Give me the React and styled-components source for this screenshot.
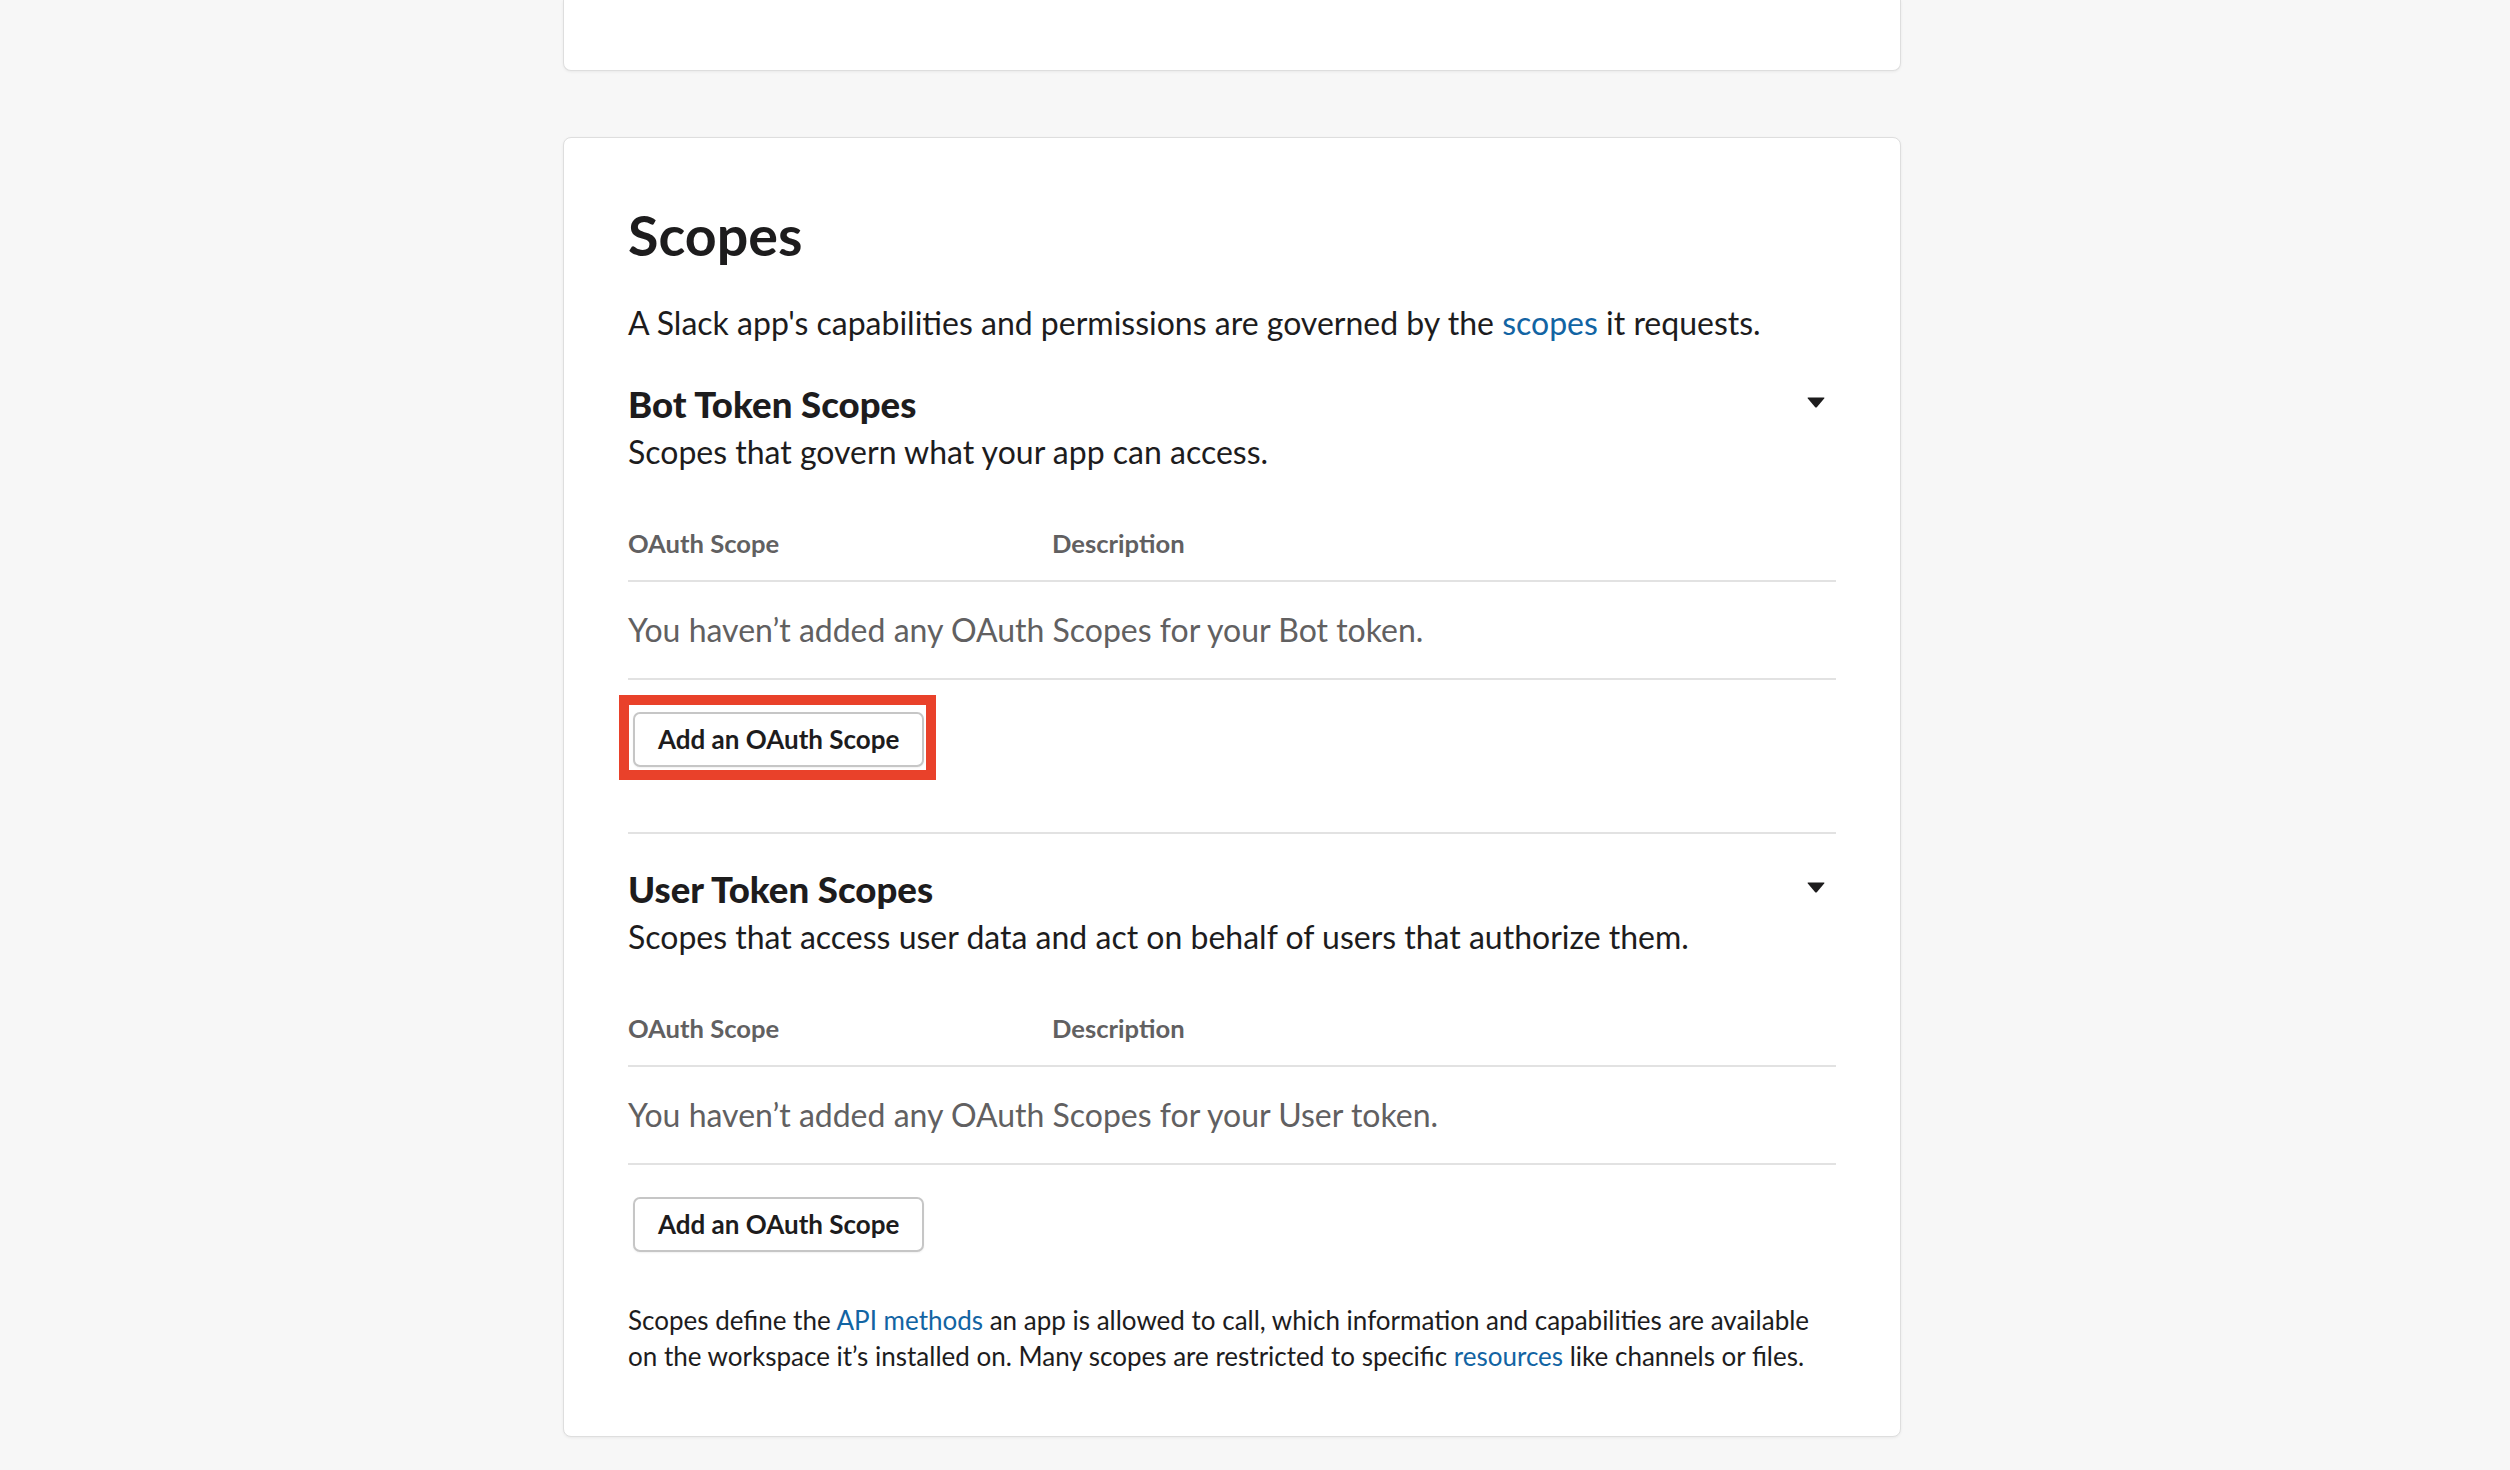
import React from "react";
import styled, { createGlobalStyle } from "styled-components";

const Global = createGlobalStyle`
  html, body { margin: 0; padding: 0; }
  body {
    background: #f7f7f7;
    font-family: Lato, "Open Sans", "Liberation Sans", sans-serif;
    color: #1d1c1d;
    -webkit-font-smoothing: antialiased;
  }
`;

const Page = styled.div`
  display: grid;
  grid-template-columns: 563px 1338px 1fr;
  min-height: 1470px;
`;

const Main = styled.main`
  grid-column: 2;
  display: flex;
  flex-direction: column;
  gap: 66px;
`;

const Card = styled.section`
  box-sizing: border-box;
  background: #fff;
  border: 1px solid #dedede;
  border-radius: 8px;
  box-shadow: 0 1px 3px rgba(0, 0, 0, 0.06);
  padding: 64px 64px 62px;
`;

const TopCard = styled(Card)`
  height: 71px;
  padding: 0;
  border-top: none;
  border-radius: 0 0 8px 8px;
`;

const Title = styled.h1`
  margin: 0;
  font-size: 55.6px;
  line-height: 1.2;
  font-weight: 700;
  color: #1d1c1d;
`;

const Lead = styled.p`
  margin: 30px 0 0;
  font-size: 32px;
  line-height: 48px;
  font-weight: 400;
  color: #1d1c1d;
`;

const Link = styled.a`
  color: #1264a3;
  text-decoration: none;
`;

const Section = styled.div`
  padding-top: ${(p) => p.$pt}px;
  padding-bottom: ${(p) => p.$pb || 0}px;
  border-bottom: ${(p) => (p.$divider ? "2px solid #e2e2e2" : "none")};
`;

const SectionHead = styled.div`
  display: flex;
  align-items: center;
  justify-content: space-between;
`;

const SectionTitle = styled.h2`
  margin: 0;
  font-size: 36.6px;
  line-height: 1.2;
  font-weight: 900;
  color: #1d1c1d;
`;

const Caret = styled.svg`
  width: 18px;
  height: 11px;
  margin-right: 11px;
  margin-top: -4px;
`;

const SectionSub = styled.p`
  margin: 1px 0 0;
  font-size: 32px;
  line-height: 48px;
  color: #1d1c1d;
`;

const Table = styled.div`
  margin-top: 49px;
`;

const HeadRow = styled.div`
  display: grid;
  grid-template-columns: 424px 1fr;
  padding-bottom: 19px;
  border-bottom: 2px solid #e2e2e2;
`;

const HeadCell = styled.div`
  font-size: 25.6px;
  line-height: 36px;
  font-weight: 700;
  color: #616061;
`;

const EmptyRow = styled.div`
  padding: 24px 0 24px;
  font-size: 32px;
  line-height: 48px;
  color: #616061;
  border-bottom: 2px solid #e2e2e2;
`;

const ButtonRow = styled.div`
  display: flex;
  padding: 32px 0 0 5px;
`;

const Button = styled.button`
  position: relative;
  box-sizing: border-box;
  height: 55px;
  padding: 0 23px;
  background: #fff;
  border: 2px solid #c6c6c6;
  border-radius: 7px;
  box-shadow: 0 1px 2px rgba(0, 0, 0, 0.06);
  font-family: Lato, "Open Sans", "Liberation Sans", sans-serif;
  font-size: 26px;
  font-weight: 700;
  color: #1d1c1d;
  cursor: pointer;

  ${(p) =>
    p.$highlight &&
    `
    &::after {
      content: "";
      position: absolute;
      left: -16px;
      right: -14px;
      top: -19px;
      bottom: -15px;
      border: 10px solid #e9412a;
      pointer-events: none;
    }
  `}
`;

const Footer = styled.p`
  margin: 50px 0 0;
  font-size: 26px;
  line-height: 36px;
  color: #1d1c1d;
`;

const CaretIcon = () => (
  <Caret viewBox="0 0 18 11" aria-hidden="true">
    <path
      d="M1.2 0.5 H16.8 Q18 0.5 17.2 1.6 L9.8 10.2 Q9 11 8.2 10.2 L0.8 1.6 Q0 0.5 1.2 0.5 Z"
      fill="#1d1c1d"
    />
  </Caret>
);

const TokenSection = ({ title, sub, token, highlight, pt, pb, divider }) => (
  <Section $pt={pt} $pb={pb} $divider={divider}>
    <SectionHead>
      <SectionTitle>{title}</SectionTitle>
      <CaretIcon />
    </SectionHead>
    <SectionSub>{sub}</SectionSub>
    <Table>
      <HeadRow>
        <HeadCell>OAuth Scope</HeadCell>
        <HeadCell>Description</HeadCell>
      </HeadRow>
      <EmptyRow>You haven’t added any OAuth Scopes for your {token} token.</EmptyRow>
    </Table>
    <ButtonRow>
      <Button $highlight={highlight}>Add an OAuth Scope</Button>
    </ButtonRow>
  </Section>
);

export default function App() {
  return (
    <>
      <Global />
      <Page>
        <Main>
          <TopCard />
          <Card>
            <Title>Scopes</Title>
            <Lead>
              A Slack app's capabilities and permissions are governed by the{" "}
              <Link href="#">scopes</Link> it requests.
            </Lead>
            <TokenSection
              title="Bot Token Scopes"
              sub="Scopes that govern what your app can access."
              token="Bot"
              highlight
              pt={36}
              pb={65}
              divider
            />
            <TokenSection
              title="User Token Scopes"
              sub="Scopes that access user data and act on behalf of users that authorize them."
              token="User"
              pt={34}
            />
            <Footer>
              Scopes define the <Link href="#">API methods</Link> an app is allowed to call,
              which information and capabilities are available on the workspace it’s installed
              on. Many scopes are restricted to specific <Link href="#">resources</Link> like
              channels or files.
            </Footer>
          </Card>
        </Main>
      </Page>
    </>
  );
}
